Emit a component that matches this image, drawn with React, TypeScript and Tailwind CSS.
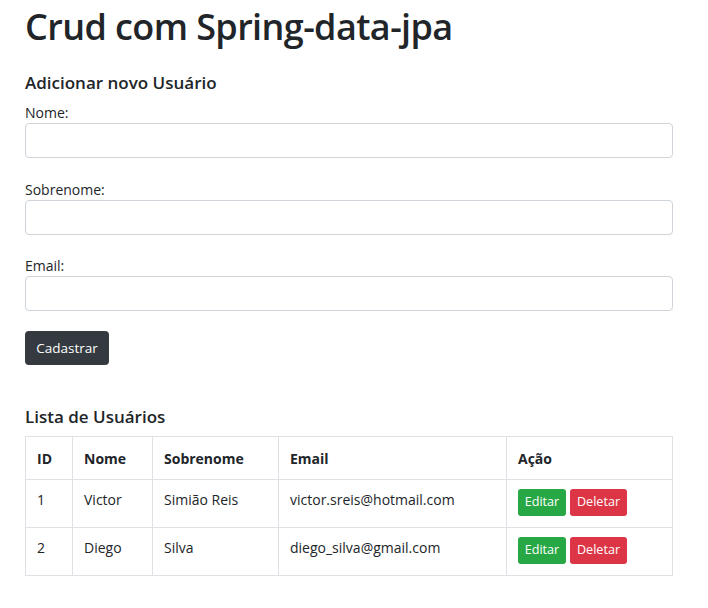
import React from "react";

const font = { fontFamily: '"Open Sans", "Noto Sans", "Liberation Sans", sans-serif' };

function Field({ label }: { label: string }) {
  return (
    <div className="flex flex-col">
      <div className="text-[14px] leading-[21px] h-[21px] text-[#212529]">{label}</div>
      <div className="h-[35px] border border-[#ced4da] rounded-[4px] bg-white" />
    </div>
  );
}

export default function App() {
  const rows = [
    ["1", "Victor", "Simião Reis", "victor.sreis@hotmail.com"],
    ["2", "Diego", "Silva", "diego_silva@gmail.com"],
  ];
  return (
    <div style={font} className="bg-white min-h-[608px] text-[#212529]">
      <div className="ml-[25px] w-[648px] flex flex-col">
        <h1 className="text-[36px] leading-[43px] font-semibold mt-[5px] tracking-[-0.6px]">Crud com Spring-data-jpa</h1>
        <h5 className="text-[17px] leading-[22px] font-semibold mt-[24px]">Adicionar novo Usuário</h5>
        <div className="mt-[8px] flex flex-col gap-[20.5px]">
          <Field label="Nome:" />
          <Field label="Sobrenome:" />
          <Field label="Email:" />
        </div>
        <div className="mt-[20px]">
          <button className="h-[34px] w-[84px] bg-[#343a40] text-white text-[13.5px] rounded-[4px]">Cadastrar</button>
        </div>
        <h5 className="text-[17px] leading-[22px] font-semibold mt-[41px] mb-[8px]">Lista de Usuários</h5>
        <table className="w-[648px] border-collapse text-[14px]">
          <thead>
            <tr className="h-[43px]">
              <th className="border border-[#dee2e6] text-left px-[11px] w-[47px] font-bold">ID</th>
              <th className="border border-[#dee2e6] text-left px-[11px] w-[80px] font-bold">Nome</th>
              <th className="border border-[#dee2e6] text-left px-[11px] w-[126px] font-bold">Sobrenome</th>
              <th className="border border-[#dee2e6] text-left px-[11px] w-[228px] font-bold">Email</th>
              <th className="border border-[#dee2e6] text-left px-[11px] font-bold">Ação</th>
            </tr>
          </thead>
          <tbody>
            {rows.map((r) => (
              <tr key={r[0]} className="h-[48px]">
                {r.map((c, i) => (
                  <td key={i} className="border border-[#dee2e6] px-[11px] align-top pt-[9px]">{c}</td>
                ))}
                <td className="border border-[#dee2e6] px-[11px] align-top pt-[9px]">
                  <div className="flex gap-[4px]">
                    <button className="h-[27px] w-[48px] bg-[#28a745] text-white text-[12.6px] rounded-[3px]">Editar</button>
                    <button className="h-[27px] w-[57px] bg-[#dc3545] text-white text-[12.6px] rounded-[3px]">Deletar</button>
                  </div>
                </td>
              </tr>
            ))}
          </tbody>
        </table>
      </div>
    </div>
  );
}
